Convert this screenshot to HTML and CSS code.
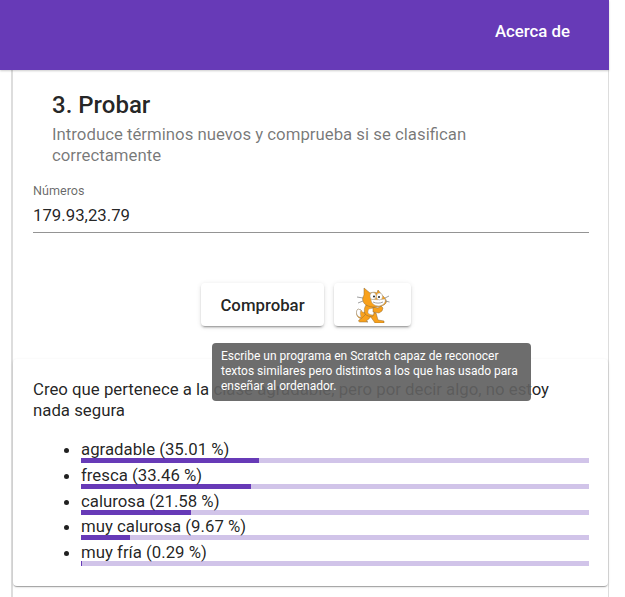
FILE: index.html
```html
<!DOCTYPE html>
<html lang="es">
<head>
  <meta charset="UTF-8">
  <meta name="viewport" content="width=device-width, initial-scale=1.0">
  <title>Probar</title>
  <link rel="stylesheet" href="styles.css">
</head>
<body>
  <header class="toolbar">
    <a class="toolbar-link">Acerca de</a>
  </header>

  <main class="page">
    <section class="card">
      <div class="card-title">
        <h2>3. Probar</h2>
        <p>Introduce términos nuevos y comprueba si se clasifican correctamente</p>
      </div>

      <div class="field">
        <label>Números</label>
        <div class="field-value">179.93,23.79</div>
      </div>

      <div class="actions">
        <button class="btn">Comprobar</button>
        <button class="btn btn-icon">
          <!-- scratch cat -->
          <svg width="34" height="36" viewBox="0 0 34 36">
            <!-- tail -->
            <path class="cat-fill" d="M9 25c-2 1-3 0-4-2l-3-1c-2 2-2 6 0 8 2 2 5 2 8 1z"/>
            <path class="cat-white" d="M2 22l3 1c-1 2-1 4 0 7-1 0-2 0-3-1-2-2-2-5 0-7z"/>
            <!-- back leg -->
            <path class="cat-fill" d="M10 27l5 2c-1 2-3 4-5 5l2 1H4c-1 0-2-1-1-2 2-1 4-3 7-6z"/>
            <!-- front leg -->
            <path class="cat-fill" d="M16 25l4 1 2 7 6 1v2h-9c-2-3-4-6-6-8z"/>
            <!-- body -->
            <path class="cat-fill" d="M10 18l8 1c1 3 1 7-1 10-3 1-6 0-8-2-1-3-1-6 1-9z"/>
            <path class="cat-white" d="M13 22l5-1c1 2 0 5-1 7-2 0-4-1-5-2 0-2 0-3 1-4z"/>
            <!-- arm -->
            <path class="cat-fill" d="M17 20l5 1 3-2 2 2-1 3-3 2-6-1z"/>
            <!-- head -->
            <path class="cat-fill" d="M8 1l6 5c3-1 5-1 7 0l1-3 5 6c3 3 4 5 3 7-2 3-7 4-12 4-5 0-10-2-11-6-1-2 0-4 1-6z"/>
            <path class="cat-white" d="M15 12c4 1 9 1 14 0 1 3-1 6-6 7-5 0-8-3-8-7z"/>
            <ellipse class="cat-white" cx="17" cy="9" rx="3" ry="3.6"/>
            <ellipse class="cat-white" cx="23.500" cy="9.500" rx="3" ry="3.400"/>
            <circle class="cat-pupil" cx="18" cy="9.500" r="1"/>
            <circle class="cat-pupil" cx="23" cy="10" r="1"/>
            <path class="cat-line" d="M29 11l4-2M29.500 14l4 1M7 11L1 10M7 14l-5 2M17 15c3 1.500 7 1.500 10 0"/>
          </svg>
        </button>
      </div>

      <div class="result">
        <p>Creo que pertenece a la clase agradable, pero por decir algo, no estoy nada segura</p>
        <ul class="scores">
          <li>agradable (35.01 %)<div class="bar"><div class="bar-fill" style="width: 35.01%"></div></div></li>
          <li>fresca (33.46 %)<div class="bar"><div class="bar-fill" style="width: 33.46%"></div></div></li>
          <li>calurosa (21.58 %)<div class="bar"><div class="bar-fill" style="width: 21.58%"></div></div></li>
          <li>muy calurosa (9.67 %)<div class="bar"><div class="bar-fill" style="width: 9.67%"></div></div></li>
          <li>muy fría (0.29 %)<div class="bar"><div class="bar-fill" style="width: 0.29%"></div></div></li>
        </ul>
        <div class="tooltip">Escribe un programa en Scratch capaz de reconocer textos similares pero distintos a los que has usado para enseñar al ordenador.</div>
      </div>
    </section>
  </main>
</body>
</html>
```

FILE: styles.css
```css
/* ---- page ---- */
body {
  margin: 0; height: 597px; overflow: hidden; background: #fff;
  color: rgba(0,0,0,0.87); font-family: Roboto, "Liberation Sans", sans-serif;
  font-size: 16.8px;
}

/* toolbar */
.toolbar {
  width: 609px; height: 70px; box-sizing: border-box; padding: 0 39px 8px 0;
  display: flex; align-items: center; justify-content: flex-end;
  background: #673ab7; color: #fff; position: relative; z-index: 2;
  box-shadow: 0 1px 2px rgba(0,0,0,.2);
}
.toolbar-link { font-weight: 500; }

/* outer card */
.page { width: 609px; padding-left: 11px; box-sizing: border-box; }
.card {
  background: #fff; border: solid #ddd; border-width: 0 1px 0 2px;
  height: 527px; box-sizing: border-box;
}
.card-title { padding: 19px 39px 0; }
.card-title h2 { margin: 0; font-size: 24px; line-height: 32px; font-weight: 500; }
.card-title p { margin: 3px 0 0; line-height: 21px; color: rgba(0,0,0,0.54); }

/* text field */
.field { margin: 18px 19px 0 20px; border-bottom: 1px solid #949494; padding-bottom: 6px; }
.field label { display: block; font-size: 12.6px; line-height: 14px; color: rgba(0,0,0,0.6); }
.field-value { margin-top: 6px; line-height: 22px; }

/* buttons */
.actions { display: flex; justify-content: center; gap: 10px; margin-top: 50px; padding-right: 9px; }
.btn {
  height: 43px; width: 123px; border: 0; border-radius: 4px; background: #fff;
  font: 500 16.8px Roboto, sans-serif; color: rgba(0,0,0,0.87);
  box-shadow: 0 3px 1px -2px rgba(0,0,0,.2), 0 2px 2px 0 rgba(0,0,0,.14), 0 1px 5px 0 rgba(0,0,0,.12);
}
.btn-icon { width: 77px; padding: 0; display: flex; align-items: center; justify-content: center; }
.cat-fill { fill: #f9a11b; stroke: #8f6a35; stroke-width: .5; }
.cat-white { fill: #fff; stroke: #8f8f8f; stroke-width: .4; }
.cat-pupil { fill: #222; }
.cat-line { stroke: #777; stroke-width: .7; fill: none; }

/* result */
.result {
  position: relative; margin-top: 33px; height: 227px; box-sizing: border-box;
  padding: 20px 19px 0 20px; border-radius: 4px; background: #fff;
  box-shadow: 0 2px 1px -1px rgba(0,0,0,.2), 0 1px 1px 0 rgba(0,0,0,.14), 0 1px 3px 0 rgba(0,0,0,.12);
}
.result > p { margin: 0; line-height: 21px; }
.scores { margin: 18px 0 0; padding-left: 48px; }
.scores li { line-height: 20px; height: 25.8px; }
.bar { height: 5px; background: #d1c4e9; margin-top: -1px; }
.bar-fill { height: 100%; background: #673ab7; }

/* tooltip, sits over the result text */
.tooltip {
  position: absolute; left: 199px; top: -16px; width: 319px; box-sizing: border-box;
  padding: 6px 9px 7px; border-radius: 4px; background: rgba(97,97,97,.92);
  color: #fff; font-size: 12px; line-height: 15px;
}
```
